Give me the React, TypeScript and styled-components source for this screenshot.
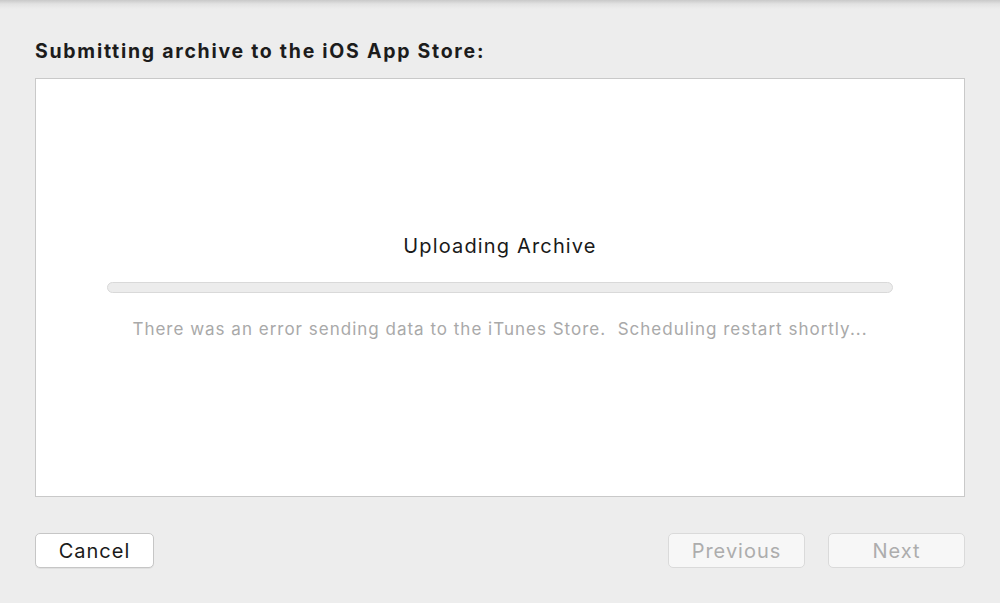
import styled, { createGlobalStyle } from "styled-components";

const GlobalStyle = createGlobalStyle`
  html, body {
    margin: 0;
    padding: 0;
    background: #ededed;
  }
  * {
    box-sizing: border-box;
  }
`;

const Sheet = styled.div`
  width: 1000px;
  height: 603px;
  padding: 0 35px;
  display: flex;
  flex-direction: column;
  font-family: Inter, "Helvetica Neue", "Liberation Sans", sans-serif;
  background:
    linear-gradient(to bottom, #c9c9c9 0px, #e2e2e2 4px, #ededed 9px) top / 100% 10px no-repeat,
    #ededed;
`;

const Title = styled.h1`
  margin: 38px 0 0;
  height: 40px;
  font-size: 19.5px;
  font-weight: 700;
  color: #1c1c1c;
  letter-spacing: 1.72px;
  line-height: 26px;
`;

const Panel = styled.div`
  height: 419px;
  background: #ffffff;
  border: 1.5px solid #c9c9c9;
  display: flex;
  flex-direction: column;
  align-items: center;
  padding: 155px 71px 0;
`;

const Status = styled.div`
  font-size: 20px;
  color: #1a1a1a;
  line-height: 24px;
  height: 24px;
  letter-spacing: 1.15px;
`;

const Track = styled.div`
  width: 100%;
  height: 11px;
  margin-top: 24px;
  border-radius: 6px;
  background: #ececec;
  border: 1px solid #d9d9d9;
`;

const Message = styled.div`
  margin-top: 25px;
  font-size: 17px;
  line-height: 22px;
  color: #a9a9a9;
  letter-spacing: 1px;
  white-space: pre;
`;

const Footer = styled.div`
  margin-top: 36px;
  display: flex;
  align-items: center;
  gap: 23px;
`;

const Spacer = styled.div`
  flex: 1;
`;

const Button = styled.button<{ $w: number; $disabled?: boolean }>`
  width: ${(p) => p.$w}px;
  height: 35px;
  border-radius: 5px;
  font-family: inherit;
  font-size: 20px;
  letter-spacing: 1px;
  padding: 0;
  background: ${(p) => (p.$disabled ? "#f7f7f7" : "#ffffff")};
  color: ${(p) => (p.$disabled ? "#adadad" : "#1a1a1a")};
  border: 1px solid ${(p) => (p.$disabled ? "#dadada" : "#c6c6c6")};
  box-shadow: ${(p) => (p.$disabled ? "none" : "0 1px 0 rgba(0,0,0,0.05)")};
`;

export default function App() {
  return (
    <>
      <GlobalStyle />
      <Sheet>
        <Title>Submitting archive to the iOS App Store:</Title>
        <Panel>
          <Status>Uploading Archive</Status>
          <Track />
          <Message>
            {"There was an error sending data to the iTunes Store.  Scheduling restart shortly..."}
          </Message>
        </Panel>
        <Footer>
          <Button $w={119}>Cancel</Button>
          <Spacer />
          <Button $w={137} $disabled>
            Previous
          </Button>
          <Button $w={137} $disabled>
            Next
          </Button>
        </Footer>
      </Sheet>
    </>
  );
}
